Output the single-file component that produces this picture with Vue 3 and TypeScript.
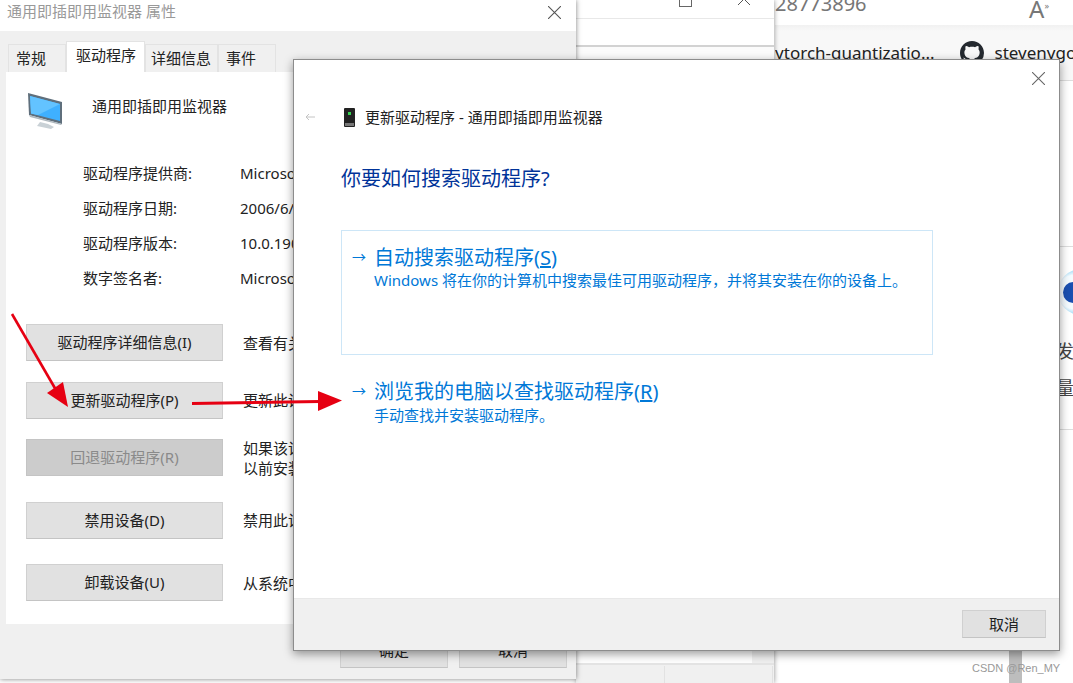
<script setup lang="ts">
const tabs = [
  { label: '常规', width: 58, pad: 7, active: false },
  { label: '驱动程序', width: 79, pad: 9, active: true },
  { label: '详细信息', width: 73, pad: 5, active: false },
  { label: '事件', width: 58, pad: 7, active: false },
]

const infoRows = [
  { label: '驱动程序提供商:', value: 'Microsoft' },
  { label: '驱动程序日期:', value: '2006/6/21' },
  { label: '驱动程序版本:', value: '10.0.19041.1' },
  { label: '数字签名者:', value: 'Microsoft Windows' },
]

const actions = [
  { label: '驱动程序详细信息(I)', lines: ['查看有关已安装驱动程序的详细信息。'], disabled: false, wide: false },
  { label: '更新驱动程序(P)', lines: ['更新此设备的驱动程序。'], disabled: false, wide: false },
  { label: '回退驱动程序(R)', lines: ['如果该设备在更新驱动程序时失败，则回退到', '以前安装的驱动程序。'], disabled: true, wide: true },
  { label: '禁用设备(D)', lines: ['禁用此设备。'], disabled: false, wide: true },
  { label: '卸载设备(U)', lines: ['从系统中卸载设备(高级)。'], disabled: false, wide: false },
]
</script>

<template>
  <div class="desk">
    <!-- browser behind everything -->
    <section class="browser">
      <div class="browser-top">
        <span class="post-id">28773896</span>
        <span class="read-mode">A<sup>»</sup></span>
      </div>
      <div class="bookmarks">
        <span class="bookmark">pytorch-quantizatio...</span>
        <svg class="gh" viewBox="0 0 16 16" width="24" height="24">
          <path fill="#24292f" d="M8 0C3.58 0 0 3.58 0 8c0 3.54 2.29 6.53 5.47 7.59.4.07.55-.17.55-.38 0-.19-.01-.82-.01-1.49-2.01.37-2.53-.49-2.69-.94-.09-.23-.48-.94-.82-1.13-.28-.15-.68-.52-.01-.53.63-.01 1.08.58 1.23.82.72 1.21 1.87.87 2.33.66.07-.52.28-.87.51-1.07-1.78-.2-3.64-.89-3.64-3.95 0-.87.31-1.59.82-2.15-.08-.2-.36-1.02.08-2.12 0 0 .67-.21 2.2.82.64-.18 1.32-.27 2-.27s1.36.09 2 .27c1.53-1.04 2.2-.82 2.2-.82.44 1.1.16 1.92.08 2.12.51.56.82 1.27.82 2.15 0 3.07-1.87 3.75-3.65 3.95.29.25.54.73.54 1.48 0 1.07-.01 1.93-.01 2.2 0 .21.15.46.55.38A8.01 8.01 0 0 0 16 8c0-4.42-3.58-8-8-8z" />
        </svg>
        <span class="bookmark">stevenygo</span>
      </div>
      <div class="side-card">
        <span class="ring"><span class="ball"></span></span>
        <span class="side-a">发</span>
        <span class="side-b">量</span>
      </div>
      <div class="scroll-thumb"></div>
      <span class="watermark">CSDN @Ren_MY</span>
    </section>

    <!-- window between the two dialogs -->
    <section class="middle">
      <div class="middle-caption">
        <span class="max-box"></span>
        <svg class="middle-close" viewBox="0 0 12 12" width="12" height="12">
          <path d="M0 0l12 12M12 0L0 12" stroke="#555" fill="none" />
        </svg>
      </div>
      <div class="middle-menu"></div>
      <div class="middle-fill"></div>
      <div class="middle-combo">
        <span class="combo-btn">
          <svg viewBox="0 0 8 6" width="9" height="6"><path d="M1 1l3 4 3-4" stroke="#555" stroke-width="1.6" fill="none" /></svg>
        </span>
      </div>
      <div class="middle-table">
        <span class="cell"></span>
        <span class="cell last"></span>
      </div>
    </section>

    <!-- device properties -->
    <section class="props">
      <header class="props-title">
        <span class="props-name">通用即插即用监视器 属性</span>
        <svg viewBox="0 0 12 12" width="13" height="13">
          <path d="M0 0l12 12M12 0L0 12" stroke="#555" fill="none" />
        </svg>
      </header>
      <div class="props-body">
        <nav class="tabs">
          <span
            v-for="tab in tabs"
            :key="tab.label"
            class="tab"
            :class="{ active: tab.active }"
            :style="{ width: tab.width + 'px', paddingLeft: tab.pad + 'px' }"
          >{{ tab.label }}</span>
        </nav>
        <div class="panel">
          <div class="device-head">
            <svg viewBox="0 0 35 36" width="35" height="36">
              <path d="M0 0l34 9v22L1 22z" fill="#5f6f7c" />
              <path d="M2 3l30 8v17L3 20.500z" fill="#3fb0ff" />
              <path d="M2 3l30 8L10 22 3 20.500z" fill="#63c3ff" />
              <path d="M1 22l33 9-1 1-31-8z" fill="#aeb8bf" />
              <path d="M12 29l8 2 6 3-3 2-14-3z" fill="#c9d1d6" />
            </svg>
            <span class="device-name">通用即插即用监视器</span>
          </div>
          <dl class="info">
            <div v-for="row in infoRows" :key="row.label" class="info-row">
              <dt>{{ row.label }}</dt>
              <dd>{{ row.value }}</dd>
            </div>
          </dl>
          <div class="actions">
            <div v-for="item in actions" :key="item.label" class="action" :class="{ wide: item.wide }">
              <button class="btn action-btn" :class="{ off: item.disabled }">{{ item.label }}</button>
              <p class="action-text">
                <span v-for="line in item.lines" :key="line">{{ line }}</span>
              </p>
            </div>
          </div>
        </div>
        <footer class="props-foot">
          <button class="btn foot-btn">确定</button>
          <button class="btn foot-btn">取消</button>
        </footer>
      </div>
    </section>

    <!-- update driver wizard -->
    <section class="wizard">
      <div class="wizard-main">
        <svg class="wizard-close" viewBox="0 0 12 12" width="13" height="13">
          <path d="M0 0l12 12M12 0L0 12" stroke="#666" fill="none" />
        </svg>
        <div class="wizard-head">
          <svg class="back" viewBox="0 0 10 8" width="10" height="8">
            <path d="M10 4H1M4 1L1 4l3 3" stroke="#c4c4c4" fill="none" />
          </svg>
          <svg class="device" viewBox="0 0 11 19" width="11" height="19">
            <rect width="11" height="19" rx="1" fill="#222" />
            <rect x="4" y="4" width="3" height="3" fill="#35d04f" />
            <rect x="1" y="15" width="9" height="3" fill="#777" />
          </svg>
          <span class="wizard-name">更新驱动程序 - 通用即插即用监视器</span>
        </div>
        <h1 class="wizard-q">你要如何搜索驱动程序?</h1>
        <div class="choice boxed">
          <span class="choice-title"><i>→</i>自动搜索驱动程序(<u>S</u>)</span>
          <span class="choice-desc">Windows 将在你的计算机中搜索最佳可用驱动程序，并将其安装在你的设备上。</span>
        </div>
        <div class="choice">
          <span class="choice-title"><i>→</i>浏览我的电脑以查找驱动程序(<u>R</u>)</span>
          <span class="choice-desc">手动查找并安装驱动程序。</span>
        </div>
      </div>
      <footer class="wizard-foot">
        <button class="btn cancel">取消</button>
      </footer>
    </section>

    <!-- red annotation arrows -->
    <svg class="marks" viewBox="0 0 1073 683" width="1073" height="683">
      <path d="M12 314L56 390" stroke="#e60012" stroke-width="2.6" fill="none" />
      <path d="M68 407L47 393 63 382z" fill="#e60012" />
      <path d="M192 403.500L320 401.500" stroke="#e60012" stroke-width="3" fill="none" />
      <path d="M342 400.500L318 391V411z" fill="#e60012" />
    </svg>
  </div>
</template>

<style>
html,
body {
  margin: 0;
  background: #fff;
}
</style>

<style scoped>
.desk {
  position: relative;
  width: 1073px;
  height: 683px;
  overflow: hidden;
  background: #fff;
  font-family: "Noto Sans", "Noto Sans CJK SC", sans-serif;
  font-size: 15px;
  color: #222;
}

.browser {
  position: absolute;
  left: 775px;
  top: 0;
  width: 298px;
  height: 683px;
  overflow: hidden;
}

.browser-top {
  display: flex;
  justify-content: space-between;
  height: 25px;
  padding-right: 24px;
  font-size: 20px;
  line-height: 10px;
  color: #777;
}

.post-id {
  margin-top: -1px;
}

.read-mode {
  font-size: 24px;
  line-height: 12px;
}

.read-mode sup {
  font-size: 9px;
}

.bookmarks {
  display: flex;
  align-items: center;
  height: 55px;
  margin-left: -10px;
  background: linear-gradient(#f1f1f1, #f8f8f8 6px);
  border-bottom: 1px solid #ddd;
  font-size: 17px;
  color: #222;
}

.bookmark {
  white-space: nowrap;
}

.gh {
  margin: 0 11px 0 25px;
  flex: none;
}

.side-card {
  position: relative;
  height: 182px;
  margin-top: 165px;
  border-top: 1px solid #ddd;
  border-bottom: 1px solid #ddd;
}

.ring {
  position: absolute;
  left: 283px;
  top: 22px;
  display: flex;
  align-items: center;
  box-sizing: border-box;
  width: 46px;
  height: 46px;
  padding-left: 5px;
  border-radius: 50%;
  background: radial-gradient(circle at 36% 50%, #f4fbff 45%, #8fd3f4 62%, #c9ebfa 100%);
}

.ball {
  width: 21px;
  height: 21px;
  border-radius: 50%;
  background: #1a4fb0;
}

.side-a,
.side-b {
  position: absolute;
  left: 281px;
  font-size: 18px;
  color: #444;
}

.side-a {
  top: 90px;
}

.side-b {
  top: 127px;
}

.scroll-thumb {
  position: absolute;
  left: 234px;
  top: 650px;
  width: 13px;
  height: 33px;
  background: #bdbdbd;
}

.watermark {
  position: absolute;
  left: 197px;
  top: 661px;
  font-family: "Liberation Sans", sans-serif;
  font-size: 11px;
  line-height: 14px;
  color: #999;
  white-space: nowrap;
}

.middle {
  position: absolute;
  left: 576px;
  top: 0;
  display: flex;
  flex-direction: column;
  width: 198px;
  height: 683px;
  background: #fff;
  box-shadow: 0 0 5px rgba(0, 0, 0, 0.45);
}

.middle-caption {
  position: relative;
  flex: none;
  height: 18px;
  border-bottom: 1px solid #e8e8e8;
}

.max-box {
  position: absolute;
  left: 103px;
  top: -6px;
  width: 11px;
  height: 11px;
  border: 1px solid #666;
}

.middle-close {
  position: absolute;
  left: 162px;
  top: -7px;
}

.middle-menu {
  flex: none;
  height: 26px;
  border-bottom: 2px solid #d2d2d2;
}

.middle-fill {
  flex: 1;
  background: #fbfbfb;
}

.middle-combo {
  display: flex;
  justify-content: flex-end;
  flex: none;
  height: 26px;
  background: #fff;
  border-bottom: 2px solid #e4e4e4;
}

.combo-btn {
  display: flex;
  justify-content: center;
  padding-top: 3px;
  width: 22px;
  background: #f0f0f0;
}

.middle-table {
  display: flex;
  flex: none;
  height: 17px;
  padding-top: 1px;
  background: #f0f0f0;
}

.cell {
  flex: none;
  width: 88px;
  border-right: 1px solid #e2e2e2;
}

.cell.last {
  width: 107px;
}

.props {
  position: absolute;
  left: 0;
  top: 0;
  display: flex;
  flex-direction: column;
  width: 576px;
  height: 679px;
  background: #fff;
  box-shadow: 0 0 5px rgba(0, 0, 0, 0.5);
}

.props-title {
  display: flex;
  justify-content: space-between;
  align-items: center;
  flex: none;
  height: 31px;
  padding: 0 15px 7px 7px;
  box-sizing: border-box;
  color: #999;
}

.props-name {
  margin-bottom: 4px;
}

.props-body {
  display: flex;
  flex-direction: column;
  flex: 1;
  background: #f0f0f0;
  padding: 10px 0 0 6px;
}

.tabs {
  display: flex;
  align-items: flex-end;
  flex: none;
  height: 31px;
  padding-left: 2px;
}

.tab {
  height: 28px;
  line-height: 26px;
  background: #f0f0f0;
  border: 1px solid #e3e3e3;
  border-bottom: none;
  box-sizing: border-box;
  white-space: nowrap;
}

.tab.active {
  height: 31px;
  background: #fff;
  line-height: 27px;
}

.panel {
  flex: none;
  height: 552px;
  padding: 21px 0 0 20px;
  box-sizing: border-box;
  background: #fff;
  overflow: hidden;
}

.device-head {
  display: flex;
  align-items: flex-start;
  height: 35px;
  margin-left: 2px;
}

.device-name {
  margin: 3px 0 0 29px;
  line-height: 20px;
}

.info {
  margin: 27px 0 0 57px;
}

.info-row {
  display: flex;
  align-items: center;
  height: 35px;
}

.info-row dt {
  width: 157px;
}

.info-row dd {
  margin: 0;
  white-space: nowrap;
}

.actions {
  display: flex;
  flex-direction: column;
  gap: 20.500px;
  margin-top: 29px;
}

.action {
  display: flex;
  align-items: center;
  height: 37px;
}

.action.wide {
  margin-bottom: 5px;
}

.btn {
  margin: 0;
  padding: 0 0 2px;
  font: inherit;
  color: #222;
  background: #e1e1e1;
  border: 1px solid #d0d0d0;
  border-bottom-color: #c4c4c4;
  box-sizing: border-box;
}

.action-btn {
  flex: none;
  width: 197px;
  height: 37px;
}

.action-btn.off {
  background: #cccccc;
  color: #8a8a8a;
  border-color: #c4c4c4;
}

.action-text {
  margin: 0 0 0 20px;
  white-space: nowrap;
}

.action-text span {
  display: block;
  line-height: 20px;
}

.props-foot {
  display: flex;
  justify-content: flex-end;
  gap: 11px;
  padding: 9px 9px 0 0;
}

.foot-btn {
  width: 108px;
  height: 35px;
}

.wizard {
  position: absolute;
  left: 293px;
  top: 59px;
  display: flex;
  flex-direction: column;
  width: 767px;
  height: 592px;
  box-sizing: border-box;
  background: #fff;
  border: 1px solid #8c8c8c;
  box-shadow: 0 3px 9px rgba(0, 0, 0, 0.4);
}

.wizard-main {
  position: relative;
  flex: 1;
  padding: 46px 126px 0 47px;
}

.wizard-close {
  position: absolute;
  right: 14px;
  top: 12px;
}

.wizard-head {
  position: relative;
  display: flex;
  align-items: center;
  height: 22px;
  margin-left: 2px;
  color: #222;
}

.wizard-name {
  margin-bottom: 2px;
}

.back {
  position: absolute;
  left: -38px;
}

.device {
  margin: 0 10px 0 1px;
}

.wizard-q {
  margin: 36px 0 0;
  font-size: 20px;
  font-weight: 400;
  line-height: 30px;
  color: #003399;
}

.choice {
  display: flex;
  flex-direction: column;
  box-sizing: border-box;
  height: 125px;
  padding: 11px 0 0 32px;
  margin-top: -1px;
  color: #0078d7;
  border: 1px solid transparent;
}

.choice.boxed {
  margin-top: 36px;
  margin-bottom: 11px;
  padding-top: 12px;
  border-color: #cde6f7;
}

.choice-title {
  position: relative;
  font-size: 20px;
  line-height: 30px;
}

.choice-title i {
  position: absolute;
  left: -22px;
  top: -1px;
  font-size: 14px;
  font-style: normal;
}

.choice-desc {
  margin-top: -2px;
  line-height: 20px;
}

.boxed .choice-desc {
  margin-top: -3px;
}

.wizard-foot {
  display: flex;
  justify-content: flex-end;
  flex: none;
  height: 52px;
  padding: 11px 13px 0 0;
  box-sizing: border-box;
  background: #f0f0f0;
  border-top: 1px solid #e8e8e8;
}

.cancel {
  width: 84px;
  height: 28px;
}

.marks {
  position: absolute;
  left: 0;
  top: 0;
  pointer-events: none;
}
</style>
